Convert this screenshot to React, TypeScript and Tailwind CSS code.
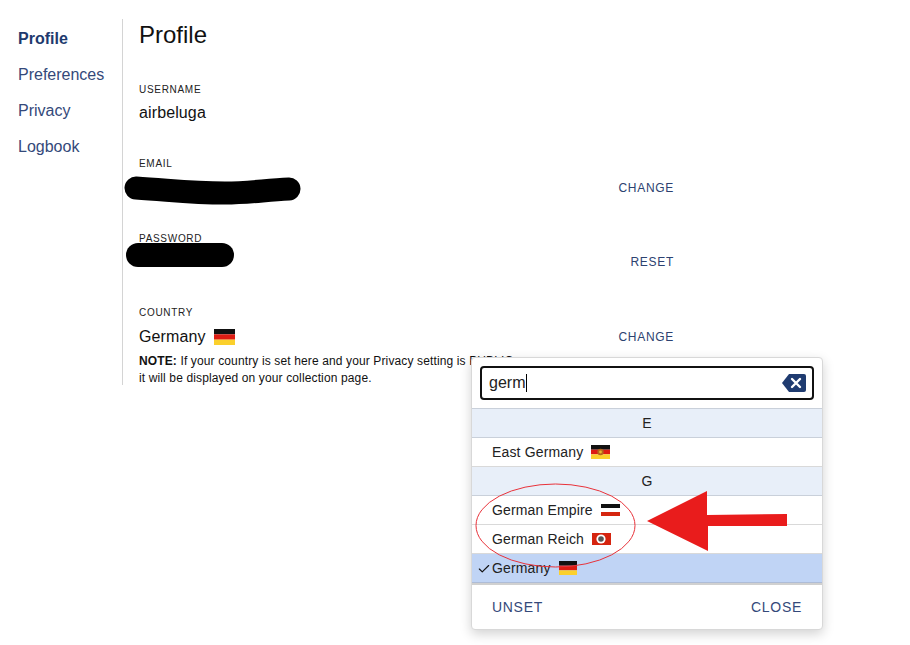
import { Check } from "lucide-react";

const navItems = ["Profile", "Preferences", "Privacy", "Logbook"];

function GermanyFlag({ className }: { className: string }) {
  return (
    <svg viewBox="0 0 3 3" preserveAspectRatio="none" className={className}>
      <rect width="3" height="1" y="0" fill="#111" />
      <rect width="3" height="1" y="1" fill="#dd1c13" />
      <rect width="3" height="1" y="2" fill="#fbd02c" />
    </svg>
  );
}

function EastGermanyFlag() {
  return (
    <svg viewBox="0 0 19 14" className="ml-2 h-[14px] w-[19px] shrink-0">
      <rect width="19" height="4.67" fill="#111" />
      <rect width="19" height="4.67" y="4.67" fill="#dd1c13" />
      <rect width="19" height="4.67" y="9.33" fill="#fbd02c" />
      <circle cx="9.5" cy="7" r="3.2" fill="#b5661c" />
      <circle cx="9.5" cy="7" r="1.4" fill="#e8b62e" />
    </svg>
  );
}

function EmpireFlag() {
  return (
    <svg viewBox="0 0 19 12" className="ml-2 h-[12px] w-[19px] shrink-0">
      <rect width="19" height="4" fill="#111" />
      <rect width="19" height="4" y="4" fill="#fff" />
      <rect width="19" height="4" y="8" fill="#d5260f" />
    </svg>
  );
}

function ReichFlag() {
  return (
    <svg viewBox="0 0 19 12" className="ml-2 h-[12px] w-[19px] shrink-0">
      <rect width="19" height="12" fill="#d5240f" />
      <circle cx="9" cy="6" r="4.6" fill="#fff" />
      <circle cx="9" cy="6" r="2.8" fill="#555" />
    </svg>
  );
}

function GroupHeader({ letter }: { letter: string }) {
  return (
    <div className="flex h-[29px] items-center justify-center border-b border-[#c9d0da] bg-[#e8eff9] text-[14px] text-[#222]">
      {letter}
    </div>
  );
}

function Option({ label, children, selected }: { label: string; children: React.ReactNode; selected?: boolean }) {
  return (
    <div
      className={
        "relative flex h-[29px] items-center border-b pl-[20px] text-[14px] tracking-[0.15px] "
        + (selected ? "border-[#aebcd6] bg-[#c0d4f5] text-[#222]" : "border-[#d9d9d9] bg-white text-[#222]")
      }
    >
      {selected && <Check className="absolute left-[5px] top-[8px] h-[14px] w-[14px] text-[#111]" strokeWidth={2} />}
      <span>{label}</span>
      {children}
    </div>
  );
}

function Field({ label, action, valueGap, children }: { label: string; action?: string; valueGap: string; children?: React.ReactNode }) {
  return (
    <div className="mb-[33px]">
      <div className="h-[12px] text-[10px] leading-[12px] tracking-[0.7px] text-[#222]">{label}</div>
      <div className={"flex h-[24px] items-center justify-between text-[16px] leading-[24px] tracking-[0.12px] text-[#111] " + valueGap}>
        <div className="flex items-center">{children}</div>
        {action && <button className="text-[12px] tracking-[0.7px] text-[#2c4270]">{action}</button>}
      </div>
    </div>
  );
}

export default function App() {
  return (
    <div className="relative h-[645px] w-[910px] overflow-hidden bg-white font-['Liberation_Sans',Arial,sans-serif]">
      <div className="flex items-start pt-[19px]">
        <nav className="flex w-[122px] shrink-0 flex-col pl-[18px] pt-[2px]">
          {navItems.map((item, index) => (
            <a
              key={item}
              className={
                "h-[36px] text-[16px] leading-[36px] "
                + (index === 0 ? "font-bold text-[#1e3a6e]" : "text-[#34497a]")
              }
            >
              {item}
            </a>
          ))}
        </nav>
        <main className="h-[366px] w-[552px] border-l border-[#d4d4d4] pl-[16px]">
          <h1 className="mb-[33px] text-[24px] leading-[32px] text-[#111]">Profile</h1>
          <Field label="USERNAME" valueGap="mt-[5px]">airbeluga</Field>
          <Field label="EMAIL" action="CHANGE" valueGap="mt-[6px]" />
          <Field label="PASSWORD" action="RESET" valueGap="mt-[5px]" />
          <div>
            <div className="h-[12px] text-[10px] leading-[12px] tracking-[0.7px] text-[#222]">COUNTRY</div>
            <div className="mt-[6px] flex h-[24px] items-center justify-between text-[16px] leading-[24px] tracking-[0.12px] text-[#111]">
              <div className="flex items-center">
                Germany
                <GermanyFlag className="ml-2 h-[16px] w-[21px]" />
              </div>
              <button className="text-[12px] tracking-[0.7px] text-[#2c4270]">CHANGE</button>
            </div>
            <p className="mt-[4px] text-[12px] leading-[17px] tracking-[0.13px] text-[#111]">
              <strong>NOTE:</strong> If your country is set here and your Privacy setting is PUBLIC,
              <br />
              it will be displayed on your collection page.
            </p>
          </div>
        </main>
      </div>

      {/* country picker popover */}
      <div className="absolute left-[471px] top-[357px] w-[352px] rounded-[4px] border border-[#d8d8d8] bg-white shadow-[0_4px_12px_rgba(0,0,0,0.18)]">
        <div className="px-[8px] pb-[8px] pt-[8px]">
          <div className="flex h-[34px] items-center justify-between rounded-[4px] border-2 border-[#111] pl-[7px] pr-[6px]">
            <span className="flex items-center text-[16px] text-[#222]">
              germ<span className="ml-[1px] inline-block h-[18px] w-px bg-black" />
            </span>
            <svg viewBox="0 0 24 18" className="h-[18px] w-[24px]">
              <path d="M7 0H22a2 2 0 0 1 2 2V16a2 2 0 0 1-2 2H7L0 9Z" fill="#1f3b70" />
              <path d="M10 5L18 13M18 5L10 13" stroke="#fff" strokeWidth="2.4" strokeLinecap="round" />
            </svg>
          </div>
        </div>
        <div className="border-t border-[#c9d0da]">
          <GroupHeader letter="E" />
          <Option label="East Germany">
            <EastGermanyFlag />
          </Option>
          <GroupHeader letter="G" />
          <Option label="German Empire">
            <EmpireFlag />
          </Option>
          <Option label="German Reich">
            <ReichFlag />
          </Option>
          <Option label="Germany" selected>
            <GermanyFlag className="ml-2 h-[14px] w-[18px]" />
          </Option>
        </div>
        <div className="flex h-[46px] items-center justify-between border-t-2 border-[#d0d0d0] px-[20px] text-[14px] tracking-[0.7px] text-[#34497a]">
          <button>UNSET</button>
          <button>CLOSE</button>
        </div>
      </div>

      {/* scribbles laid over the screenshot */}
      <svg viewBox="0 0 910 645" className="pointer-events-none absolute inset-0 h-[645px] w-[910px]">
        <path d="M136 188C170 190 190 193 225 193C250 193 265 190 289 189" fill="none" stroke="#000" strokeWidth="23" strokeLinecap="round" />
        <rect x="126" y="243" width="108" height="24" rx="12" fill="#000" />
        <ellipse cx="555.5" cy="525.5" rx="79.5" ry="41.5" fill="none" stroke="#e8323a" strokeWidth="1" />
        <path d="M647 521L707 491V515L787 514V526L708 526V551Z" fill="#e91c1c" />
      </svg>
    </div>
  );
}
